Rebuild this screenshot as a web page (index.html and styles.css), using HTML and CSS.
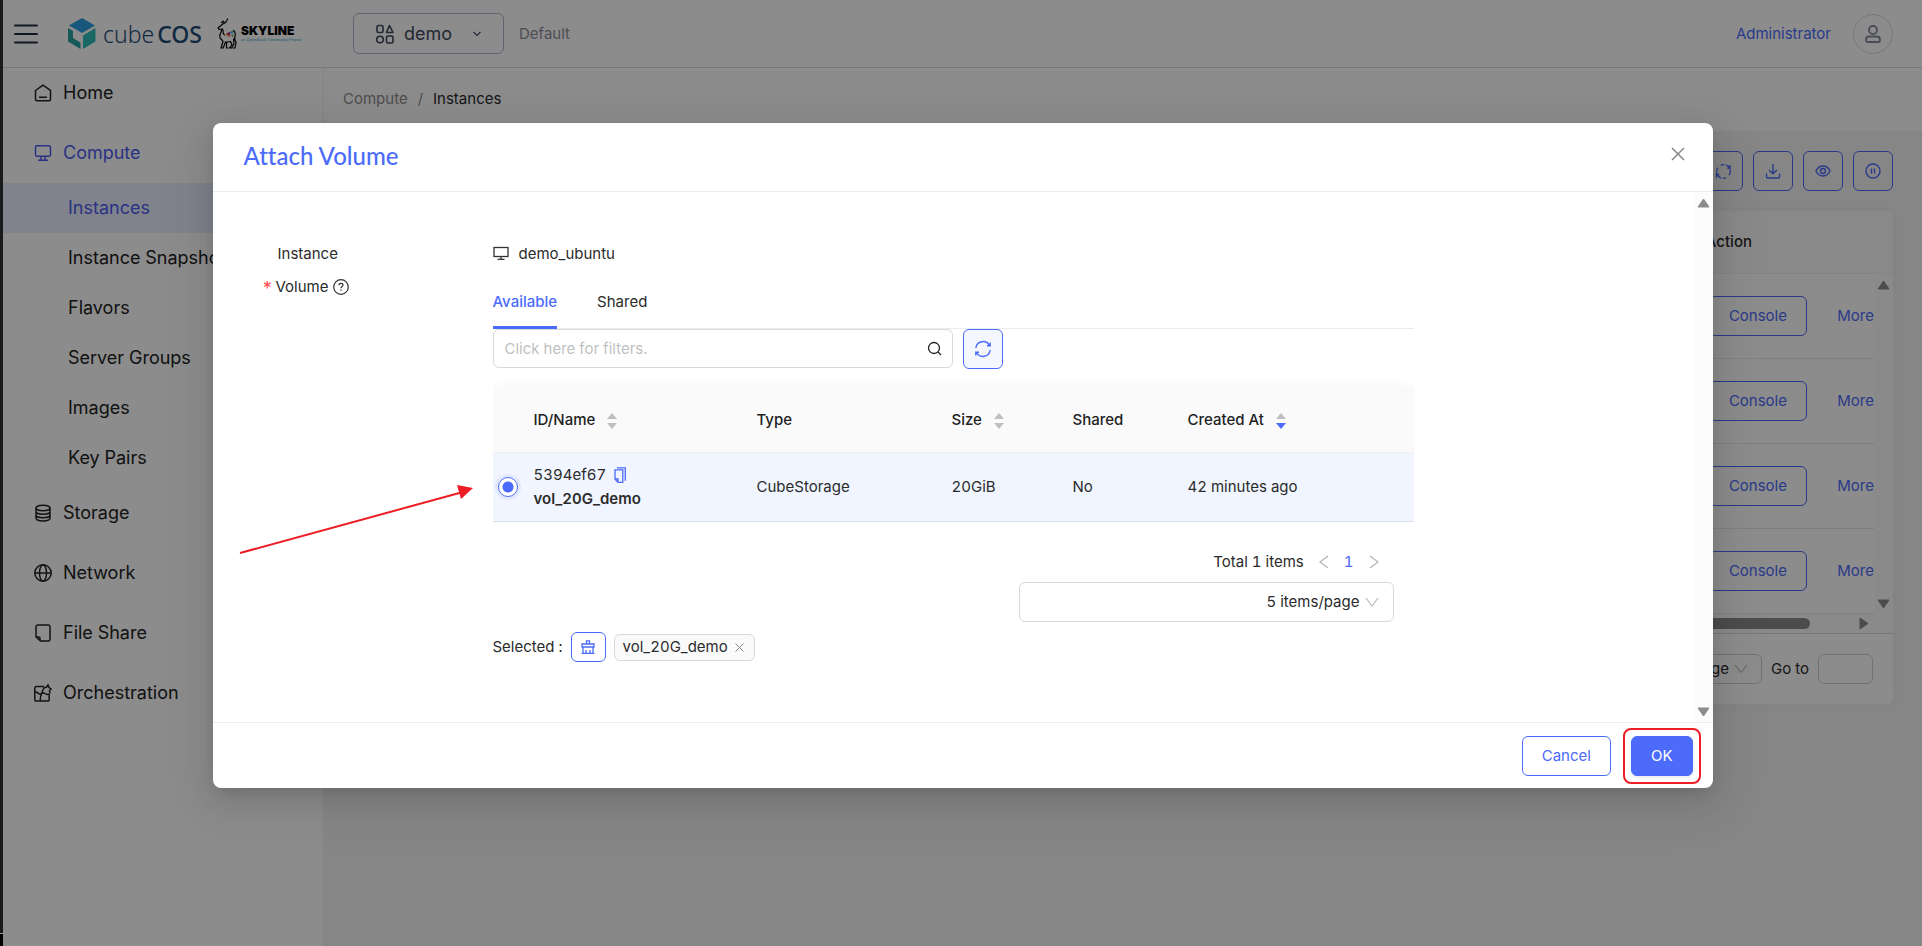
FILE: index.html
```html
<!DOCTYPE html>
<html lang="en">
<head>
  <meta charset="UTF-8">
  <meta name="viewport" content="width=device-width, initial-scale=1.0">
  <title>Instances - Attach Volume</title>
  <link rel="stylesheet" href="styles.css">
</head>
<body>
  <div class="edge"><span></span></div>

  <div class="app">
    <header class="header">
      <button class="menu-toggle" aria-label="Toggle menu">
        <svg width="24" height="20" viewBox="0 0 24 20"><path d="M1 1.500h22M1 10h22M1 18.500h22" stroke="#222c3c" stroke-width="2" stroke-linecap="round"/></svg>
      </button>
      <a class="logo" href="#">
        <svg width="28" height="31" viewBox="0 0 28 31">
          <path d="M14 0L27 7.500 14 15 1 7.500z" fill="#2b9fe0"/>
          <path d="M0 10l5 3v7l7.500 4.500V31L0 23.500z" fill="#2aa3a3"/>
          <path d="M27.500 10L15 17.500V31l12.500-7.500z" fill="#2fbdbb"/>
        </svg>
        <span class="logo-text">cube<b>COS</b></span>
        <svg class="goat" width="20" height="31" viewBox="0 0 20 31" fill="none" stroke="#000" stroke-width="1.200" stroke-linecap="round" stroke-linejoin="round">
          <path d="M10.500 1C9.500 2.500 10 4.500 6.500 5.500M7.500 5L6 3.200 4.500 4.500M6.500 5.500L4.500 7 1 10l1 1.500 3-.5M4.500 11.500c.5 2.500-2.500 4.500-1.500 8 .7 2 2.500 2.500 3 4L4 30h2.200L8.500 24M5.500 11c1.500 2-.5 5 2 6M8.500 24c2 .3 4-.5 5-.5l1.500 3-2.500 3.500h2l2.500-4-.5-5M17.500 20l1.500 5-1 5h-2M16.500 12.500c2 1.500 2 5 1 8M9.500 24.500V30h1.500"/>
          <path d="M7.500 17l2.500-2 1 2z" fill="#f5a623" stroke="none"/>
          <path d="M10 15l3-1 .5 3-2.500.500z" fill="#b0218a" stroke="none"/>
          <path d="M13 14l3-1.500-.5 4z" fill="#28a7e0" stroke="none"/>
          <path d="M9 18l3-1 2 2z" fill="#f36f21" stroke="none"/>
          <path d="M14 17l2.500-.5-.5 3z" fill="#5ab948" stroke="none"/>
        </svg>
        <span class="skyline"><strong>SKYLINE</strong><em>an OpenStack Community Project</em></span>
      </a>
      <button class="project-select">
        <svg width="18" height="20" viewBox="0 0 18 20" fill="none" stroke="#3f475a" stroke-width="1.600" stroke-linejoin="round"><rect x="1" y="1.500" width="6" height="7" rx="1.500"/><path d="M13.500 1.500L17 8.500h-6.500z"/><circle cx="4" cy="15.500" r="3.300"/><rect x="10.500" y="12" width="6.500" height="7" rx="1.500"/></svg>
        <span>demo</span>
        <svg width="8" height="6" viewBox="0 0 8 6"><path d="M.5 1L4 4.500 7.500 1" fill="none" stroke="#3f475a" stroke-width="1.100"/></svg>
      </button>
      <span class="domain">Default</span>
      <a class="user" href="#">Administrator</a>
      <button class="avatar" aria-label="Account">
        <svg width="16" height="18" viewBox="0 0 16 18" fill="none" stroke="#868b9a" stroke-width="1.800"><circle cx="8" cy="5" r="4"/><path d="M4 11.500h8c2 0 3 1.500 3 3.500 0 1.500-.5 2-1.500 2h-11C1.500 17 1 16.500 1 15c0-2 1-3.500 3-3.500z"/></svg>
      </button>
    </header>

    <div class="layout">
      <nav class="sidebar">
        <ul class="menu">
          <li><a class="menu-item" href="#"><svg width="18" height="18" viewBox="0 0 18 18"><path d="M1.500 6.500L9 1.200l7.500 5.300v8.500c0 1-.6 1.800-1.500 1.800H3c-.9 0-1.500-.8-1.500-1.800zM5 13.200h8"/></svg>Home</a></li>
          <li><a class="menu-item active" href="#"><svg width="18" height="18" viewBox="0 0 18 18"><rect x="1.500" y="1.800" width="15" height="10.500" rx="1.500"/><path d="M7 12.300V16M11 12.300V16M4 16.300h10"/></svg>Compute</a>
            <ul class="submenu">
              <li><a class="selected" href="#">Instances</a></li>
              <li><a href="#">Instance Snapshots</a></li>
              <li><a href="#">Flavors</a></li>
              <li><a href="#">Server Groups</a></li>
              <li><a href="#">Images</a></li>
              <li><a href="#">Key Pairs</a></li>
            </ul>
          </li>
          <li><a class="menu-item" href="#"><svg width="18" height="18" viewBox="0 0 18 18"><ellipse cx="9" cy="4" rx="7" ry="2.800"/><path d="M2 4v10c0 1.600 3 2.900 7 2.900s7-1.300 7-2.900V4M2 7.500c0 1.500 3 2.800 7 2.800s7-1.300 7-2.800M2 11c0 1.500 3 2.800 7 2.800s7-1.300 7-2.800"/></svg>Storage</a></li>
          <li><a class="menu-item" href="#"><svg width="18" height="18" viewBox="0 0 18 18"><circle cx="9" cy="9" r="8.200"/><ellipse cx="9" cy="9" rx="3.500" ry="8.200"/><path d="M1 9h16"/></svg>Network</a></li>
          <li><a class="menu-item" href="#"><svg width="18" height="18" viewBox="0 0 18 18"><path d="M4 1h10c1.300 0 2 .7 2 2v12c0 1.300-.7 2-2 2H6.500L2 13V3c0-1.300.7-2 2-2zM2 13h2.500c1 0 1.500.5 1.500 1.500V17"/></svg>File Share</a></li>
          <li><a class="menu-item" href="#"><svg width="18" height="18" viewBox="0 0 18 18"><path d="M10 2.500H2.500c-1 0-1.700.7-1.700 1.700v11c0 1 .7 1.800 1.700 1.800h11c1 0 1.700-.8 1.700-1.800V10M.8 8c2.500-1 3 2.500 5.500 2s3-2 4.700-.5 3 1 4.200.5M10.500 3.500C8 6 8.500 8 7.500 10S6 14 6.500 17M10.500 3.500l2-.3L14 .8l1 2.700 2.200 1.500-1.700 1.500.5 3"/></svg>Orchestration</a></li>
        </ul>
      </nav>

      <main class="content">
        <div class="breadcrumb"><a href="#">Compute</a><span>/</span><strong>Instances</strong></div>
        <div class="toolbar">
          <button class="icon-btn" aria-label="Refresh"><svg width="17" height="17" viewBox="0 0 18 18"><path d="M6.500 15.900A7.200 7.200 0 0 1 3 5M6 2.400A7.200 7.200 0 0 1 10 1.900M11.500 2.100A7.200 7.200 0 0 1 15 13M12 15.600A7.200 7.200 0 0 1 8 16.100M15.800 2v3.500h-3M1.500 15.500V12.200h3"/></svg></button>
          <button class="icon-btn" aria-label="Download"><svg width="16" height="16" viewBox="0 0 16 16"><path d="M8 1v9.500M4 7l4 3.800L12 7M1.500 10.500V14c0 .6.400 1 1 1h11c.6 0 1-.4 1-1v-3.500"/></svg></button>
          <button class="icon-btn" aria-label="Columns"><svg width="16" height="16" viewBox="0 0 16 16"><path d="M1 8c1.500-3.300 4-5 7-5s5.500 1.700 7 5c-1.500 3.300-4 5-7 5S2.500 11.300 1 8z"/><circle cx="8" cy="8" r="2.500"/></svg></button>
          <button class="icon-btn" aria-label="Pause"><svg width="16" height="16" viewBox="0 0 16 16"><circle cx="8" cy="8" r="7"/><path d="M6.500 5.500v5M9.500 5.500v5"/></svg></button>
        </div>

        <section class="card">
          <div class="card-scroll">
            <table class="list">
              <thead><tr><th colspan="2">Action</th></tr></thead>
              <tbody>
                <tr><td><button class="btn">Console</button></td><td><a href="#">More</a></td></tr>
                <tr><td><button class="btn">Console</button></td><td><a href="#">More</a></td></tr>
                <tr><td><button class="btn">Console</button></td><td><a href="#">More</a></td></tr>
                <tr><td><button class="btn">Console</button></td><td><a href="#">More</a></td></tr>
              </tbody>
            </table>
            <div class="track">
              <svg width="13" height="10" viewBox="0 0 13 10"><path d="M6.500 1L12 9H1z"/></svg>
              <svg width="13" height="10" viewBox="0 0 13 10"><path d="M6.500 9L1 1h11z"/></svg>
            </div>
          </div>
          <div class="track-h"><span class="thumb"></span><svg width="10" height="13" viewBox="0 0 10 13"><path d="M1 1l8 5.500L1 12z"/></svg></div>
          <div class="pager">
            <button class="page-size">10 items/page<svg width="14" height="10" viewBox="0 0 14 10"><path d="M1 1l6 7.500L13 1"/></svg></button>
            <label for="goto">Go to</label>
            <input type="text" id="goto">
          </div>
        </section>
      </main>
    </div>

    <div class="mask">
      <div class="modal" role="dialog" aria-labelledby="modalTitle">
        <div class="modal-header">
          <h2 id="modalTitle">Attach Volume</h2>
          <button class="close" aria-label="Close"><svg width="14" height="14" viewBox="0 0 14 14"><path d="M1 1l12 12M13 1L1 13" stroke="#888" stroke-width="1.500"/></svg></button>
        </div>

        <div class="modal-body">
          <div class="form">
            <div class="form-label">Instance</div>
            <div class="form-value">
              <svg width="16" height="16" viewBox="0 0 16 16" fill="none" stroke="#333" stroke-width="1.300"><rect x="1" y="1.500" width="14" height="9"/><path d="M8 10.500V13.300M4.500 13.300h7"/></svg>
              demo_ubuntu
            </div>

            <div class="form-label required"><i>*</i>Volume
              <svg width="16" height="16" viewBox="0 0 16 16" fill="none" stroke="#333" stroke-width="1.200"><circle cx="8" cy="8" r="7.300"/><path d="M6 6.200C6 5 6.800 4.300 8 4.300s2 .7 2 1.700c0 1.500-2 1.500-2 3.200M8 10.500v1.300"/></svg>
            </div>
            <div class="form-control">
              <div class="tabs">
                <button class="tab current">Available</button>
                <button class="tab">Shared</button>
              </div>
              <div class="filter">
                <div class="search">
                  <input type="text" aria-label="Filters" placeholder="Click here for filters.">
                  <svg width="15" height="15" viewBox="0 0 15 15" fill="none" stroke="#222" stroke-width="1.300"><circle cx="7" cy="7" r="5.500"/><path d="M11 11l3 3"/></svg>
                </div>
                <button class="icon-btn tint" aria-label="Refresh list"><svg width="18" height="18" viewBox="0 0 18 18"><path d="M1.800 8A7.300 7.300 0 0 1 15.500 5.500M16.200 10A7.300 7.300 0 0 1 2.500 12.500M16.200 2.500v3.200H13M1.800 15.500v-3.200H5"/></svg></button>
              </div>

              <div class="table-wrap">
                <table class="volumes">
                  <colgroup><col class="c-radio"><col class="c-name"><col class="c-type"><col class="c-size"><col class="c-shared"><col></colgroup>
                  <thead>
                    <tr>
                      <th></th>
                      <th>ID/Name<svg class="sorter" width="10" height="16" viewBox="0 0 10 16"><path d="M5 0l5 6H0z"/><path d="M5 16l5-6H0z"/></svg></th>
                      <th>Type</th>
                      <th>Size<svg class="sorter" width="10" height="16" viewBox="0 0 10 16"><path d="M5 0l5 6H0z"/><path d="M5 16l5-6H0z"/></svg></th>
                      <th>Shared</th>
                      <th>Created At<svg class="sorter desc" width="10" height="16" viewBox="0 0 10 16"><path d="M5 0l5 6H0z"/><path d="M5 16l5-6H0z"/></svg></th>
                    </tr>
                  </thead>
                  <tbody>
                    <tr>
                      <td><input type="radio" name="volume" aria-label="vol_20G_demo" checked></td>
                      <td>
                        <div class="vol-id">5394ef67<svg width="12" height="16" viewBox="0 0 12 16" fill="none" stroke="#4c6bfa" stroke-width="1.300"><path d="M1 2.800h7.800V15.300H4L1 12.300zM1 12h3v3.300M3 .8h8.300v13"/></svg></div>
                        <strong>vol_20G_demo</strong>
                      </td>
                      <td>CubeStorage</td>
                      <td>20GiB</td>
                      <td>No</td>
                      <td>42 minutes ago</td>
                    </tr>
                  </tbody>
                </table>
              </div>

              <div class="pagination">
                <div class="pages">
                  <span>Total 1 items</span>
                  <button aria-label="Previous"><svg width="10" height="14" viewBox="0 0 10 14"><path d="M9 1L1 7l8 6"/></svg></button>
                  <button class="on">1</button>
                  <button aria-label="Next"><svg width="10" height="14" viewBox="0 0 10 14"><path d="M1 1l8 6-8 6"/></svg></button>
                </div>
                <select aria-label="Page size"><option>5 items/page</option></select>
              </div>

              <div class="picked">
                <span>Selected :</span>
                <button class="clear" aria-label="Clear selection"><svg width="14" height="14" viewBox="0 0 14 14"><path d="M5.500 4V.8h3V4M1 4h12v3H1zM2 7v6.300h10V7M5 10v3.300M9 10v3.300M.5 13.300h13"/></svg></button>
                <span class="tag">vol_20G_demo<button aria-label="Remove"><svg width="9" height="9" viewBox="0 0 9 9"><path d="M.5.5l8 8M8.500.5l-8 8" stroke="#888"/></svg></button></span>
              </div>
            </div>
          </div>

          <div class="track">
            <svg width="13" height="10" viewBox="0 0 13 10"><path d="M6.500 1L12 9H1z"/></svg>
            <svg width="13" height="10" viewBox="0 0 13 10"><path d="M6.500 9L1 1h11z"/></svg>
          </div>

          <svg class="arrow" width="236" height="70" viewBox="0 0 236 70"><path d="M1 68L224 7" stroke="#ee1c24" stroke-width="2"/><path d="M218 0l16 3-12 11z" fill="#ee1c24"/></svg>
        </div>

        <div class="modal-footer">
          <button class="btn">Cancel</button>
          <span class="mark"><button class="btn primary">OK</button></span>
        </div>
      </div>
    </div>
  </div>
</body>
</html>
```
FILE: styles.css
```css
* {
  box-sizing: border-box;
}
body {
  margin: 0;
  min-height: 100vh;
  display: flex;
  font-family: Inter, "Liberation Sans", sans-serif;
  font-size: 15px;
  font-variant-numeric: tabular-nums;
  line-height: 24px;
  color: #2b2b2b;
}
a {
  text-decoration: none;
  color: #4c6bfa;
}
button, input, select {
  font: inherit;
  color: inherit;
  margin: 0;
  padding: 0;
  background: none;
  border: none;
}
ul {
  list-style: none;
  margin: 0;
  padding: 0;
}
svg {
  flex: none;
}

/* window edge */
.edge {
  width: 3px;
  background: #1a1a1a;
  display: flex;
  align-items: flex-end;
}
.edge span {
  width: 3px;
  height: 13px;
  background: #000;
  border-top: 1px solid #999;
}
.app {
  flex: 1;
  min-width: 0;
  position: relative;
  display: flex;
  flex-direction: column;
  background: #fff;
}

/* header */
.header {
  height: 68px;
  display: flex;
  align-items: center;
  border-bottom: 1px solid #d9d9e0;
  padding: 0 29px 0 11px;
}
.menu-toggle {
  display: flex;
  margin-right: 30px;
}
.logo {
  display: flex;
  align-items: center;
  width: 285px;
}
.logo-text {
  margin-left: 7px;
  font: 300 23px/30px "Noto Sans", sans-serif;
  color: #1f4a78;
}
.logo-text b {
  font-weight: 500;
  margin-left: 3px;
}
.goat {
  margin-left: 15px;
}
.skyline {
  display: flex;
  flex-direction: column;
  margin-left: 4px;
  color: #000;
}
.skyline strong {
  font-size: 12px;
  font-weight: 900;
  line-height: 12px;
}
.skyline em {
  font: italic 4px/6px "Liberation Sans", sans-serif;
  color: #2aa3c9;
}
.project-select {
  width: 151px;
  height: 41px;
  border: 1px solid #b0b4cc;
  border-radius: 6px;
  display: flex;
  align-items: center;
  padding: 0 22px;
  font-size: 18px;
  color: #3f475a;
}
.project-select span {
  flex: 1;
  text-align: left;
  padding-left: 10px;
}
.domain {
  flex: 1;
  margin-left: 15px;
  color: #8a8e99;
}
.avatar {
  width: 40px;
  height: 40px;
  margin-left: 22px;
  border: 1px solid #d9d9e8;
  border-radius: 50%;
  display: flex;
  align-items: center;
  justify-content: center;
}

/* sidebar */
.layout {
  flex: 1;
  display: flex;
}
.sidebar {
  width: 321px;
  padding-top: 5px;
  border-right: 1px solid #eee;
}
.menu-item {
  height: 40px;
  margin-bottom: 20px;
  padding-left: 31px;
  display: flex;
  align-items: center;
  font-size: 18px;
  color: #222;
}
.menu-item svg {
  margin-right: 11px;
  fill: none;
  stroke: currentColor;
  stroke-width: 1.5;
}
.menu-item.active, .submenu .selected {
  color: #4c5cf0;
}
.submenu {
  margin: -10px 0 10px;
}
.submenu a {
  display: block;
  padding-left: 65px;
  font-size: 18px;
  line-height: 50px;
  color: #222;
}
.submenu .selected {
  background: #e9eeff;
}

/* page behind the dialog */
.content {
  flex: 1;
  min-width: 0;
  background: #f5f5f5;
}
.breadcrumb {
  height: 63px;
  padding: 19px;
  background: #fff;
}
.breadcrumb a {
  color: #8c8c8c;
}
.breadcrumb span {
  margin: 0 10px;
  color: #8c8c8c;
}
.breadcrumb strong {
  font-weight: 400;
}
.toolbar {
  display: flex;
  justify-content: flex-end;
  gap: 10px;
  padding: 20px 29px;
}
.icon-btn {
  width: 40px;
  height: 40px;
  border: 1px solid #4c6bfa;
  border-radius: 6px;
  display: flex;
  align-items: center;
  justify-content: center;
}
.icon-btn svg {
  fill: none;
  stroke: #4c6bfa;
  stroke-width: 1.4;
}
.icon-btn.tint {
  background: #f5f7ff;
}
.card {
  margin: 0 29px 0 16px;
  background: #fff;
  border-radius: 6px;
  box-shadow: 0 0 16px rgba(60, 60, 120, 0.06);
}
.card-scroll {
  position: relative;
}
.list {
  width: 100%;
  border-collapse: collapse;
}
.list th {
  height: 62px;
  padding: 0 141px 0 0;
  text-align: right;
  font-weight: 500;
  background: #fafafa;
  border-bottom: 1px solid #eee;
}
.list td {
  height: 85px;
  padding: 0;
  text-align: right;
  border-bottom: 1px solid #e8e8e8;
}
.list td:last-child {
  width: 86px;
  padding-right: 19px;
}
.btn {
  height: 40px;
  padding: 0 19px;
  border: 1px solid #4c6bfa;
  border-radius: 6px;
  color: #4c6bfa;
}
.btn.primary {
  background: #4c6bfa;
  color: #fff;
  box-shadow: 0 2px 3px rgba(0, 0, 0, 0.08);
}
.track {
  width: 19px;
  background: #fcfcfc;
  display: flex;
  flex-direction: column;
  align-items: center;
  justify-content: space-between;
  padding: 6px 0 5px;
}
.track svg, .track-h svg {
  fill: #8b8b8b;
  stroke: #8b8b8b;
  stroke-linejoin: round;
}
.card-scroll .track {
  position: absolute;
  top: 63px;
  right: 0;
  bottom: 0;
}
.track-h {
  height: 20px;
  padding: 0 24px 0 0;
  background: #fcfcfc;
  border-bottom: 1px solid #d5d5e0;
  display: flex;
  align-items: center;
}
.thumb {
  flex: 1;
  height: 11px;
  margin-right: 49px;
  border-radius: 6px;
  background: #8b8b8b;
}
.pager {
  display: flex;
  align-items: center;
  justify-content: flex-end;
  gap: 9px;
  padding: 20px;
}
.page-size, .pager input {
  height: 30px;
  border: 1px solid #d0d0d0;
  border-radius: 6px;
}
.page-size {
  padding: 0 13px;
  display: flex;
  align-items: center;
  gap: 5px;
}
.page-size svg {
  fill: none;
  stroke: #aaa;
}
.pager input {
  width: 55px;
}

/* dialog */
.mask {
  position: absolute;
  inset: 0;
  background: rgba(0, 0, 0, 0.45);
  display: flex;
  align-items: flex-start;
  justify-content: center;
  padding-top: 123px;
}
.modal {
  width: 90%;
  max-width: 1500px;
  background: #fff;
  border-radius: 8px;
  box-shadow: 0 6px 16px -8px rgba(0, 0, 0, 0.16), 0 9px 28px 0 rgba(0, 0, 0, 0.1), 0 12px 48px 16px rgba(0, 0, 0, 0.06);
}
.modal-header {
  height: 69px;
  padding: 0 28px 0 31px;
  display: flex;
  align-items: center;
  justify-content: space-between;
  border-bottom: 1px solid #ececec;
}
.modal-header h2 {
  margin: 0;
  padding-bottom: 2px;
  font: 500 24px/30px Lato, sans-serif;
  font-variant-ligatures: none;
  color: #4c6bfa;
}
.close {
  display: flex;
  padding-bottom: 6px;
}
.modal-body {
  position: relative;
  display: flex;
}
.form {
  flex: 1;
  min-width: 0;
  display: grid;
  grid-template-columns: 280px minmax(0, 1fr) 280px;
  grid-template-rows: 33px auto;
  padding: 50px 0 60px;
}
.form-label {
  grid-column: 1;
  padding-left: 65px;
}
.form-value {
  display: flex;
  align-items: center;
  gap: 10px;
  height: 24px;
}
.form-label.required {
  padding-left: 49px;
  display: flex;
  align-items: center;
  height: 24px;
}
.required i {
  width: 14px;
  padding-top: 4px;
  font-size: 18px;
  font-style: normal;
  color: #ff4d4f;
}
.required svg {
  margin-left: 5px;
}
.tabs {
  display: flex;
  gap: 40px;
  border-bottom: 1px solid #ececec;
}
.tab {
  height: 54px;
  margin-bottom: -1px;
  padding-top: 2px;
  border-bottom: 3px solid transparent;
}
.tab.current {
  color: #4c6bfa;
  font-weight: 500;
  border-color: #4c6bfa;
}
.filter {
  display: flex;
  gap: 10px;
}
.search {
  position: relative;
  width: 50%;
}
.search input {
  width: 100%;
  height: 39px;
  padding: 0 40px 0 11px;
  border: 1px solid #d9d9d9;
  border-radius: 6px;
}
.search input::placeholder {
  color: #bfbfbf;
}
.search svg {
  position: absolute;
  right: 11px;
  top: 12px;
}
.table-wrap {
  margin-top: 3px;
  padding-top: 16px;
  overflow: hidden;
}
.volumes {
  width: 100%;
  table-layout: fixed;
  border-collapse: separate;
  border-spacing: 0;
  border-radius: 8px 8px 0 0;
  box-shadow: 0 0 14px rgba(0, 0, 0, 0.05);
}
.c-radio { width: 41px; }
.c-name { width: 223px; }
.c-type { width: 195px; }
.c-size { width: 121px; }
.c-shared { width: 115px; }
.volumes th {
  height: 65px;
  padding: 0;
  text-align: left;
  font-weight: 500;
  color: #222;
  background: #fafafa;
  border-bottom: 1px solid #f0f0f0;
}
.volumes td {
  height: 69px;
  padding: 0;
  background: #f0f5ff;
  border-bottom: 1px solid #d9dfec;
}
.sorter {
  margin-left: 12px;
  vertical-align: middle;
  fill: #bfbfbf;
}
.sorter.desc path:last-child {
  fill: #4c6bfa;
}
.volumes input {
  appearance: none;
  display: block;
  width: 20px;
  height: 20px;
  margin-left: 5px;
  border: 1px solid #4c6bfa;
  border-radius: 50%;
  background: radial-gradient(circle, #4c6bfa 5px, #fff 6px);
  box-shadow: 0 0 0 3px #e3e8ff;
}
.vol-id {
  display: flex;
  align-items: center;
  gap: 8px;
}
.volumes strong {
  font-weight: 600;
}
.pagination {
  display: flex;
  flex-direction: column;
  align-items: flex-end;
  padding: 28px 20px 0 0;
}
.pages {
  display: flex;
  align-items: center;
  gap: 15px;
  height: 24px;
  margin: 0 15px 8px 0;
}
.pages svg {
  display: block;
  fill: none;
  stroke: #b5b5b5;
  stroke-width: 1.3;
}
.pages .on {
  color: #4c6bfa;
}
.pagination select {
  appearance: none;
  width: 375px;
  height: 40px;
  padding-right: 33px;
  text-align: right;
  text-align-last: right;
  border: 1px solid #d9d9d9;
  border-radius: 6px;
  background: url("data:image/svg+xml,%3Csvg xmlns='http://www.w3.org/2000/svg' width='14' height='10'%3E%3Cpath d='M1 1l6 8 6-8' fill='none' stroke='%23bbb' stroke-width='1.200'/%3E%3C/svg%3E") no-repeat right 14px center;
}
.picked {
  display: flex;
  align-items: center;
  gap: 8px;
  margin-top: 10px;
}
.clear {
  width: 35px;
  height: 30px;
  display: flex;
  align-items: center;
  justify-content: center;
  border: 1px solid #4c6bfa;
  border-radius: 6px;
}
.clear svg {
  fill: none;
  stroke: #4c6bfa;
  stroke-width: 1.3;
}
.tag {
  height: 27px;
  padding: 0 10px 0 8px;
  display: flex;
  align-items: center;
  gap: 7px;
  background: #fafafa;
  border: 1px solid #d9d9d9;
  border-radius: 6px;
}
.tag button, .tag svg {
  display: block;
}
.arrow {
  position: absolute;
  left: 26px;
  top: 293px;
}
.modal-footer {
  height: 66px;
  padding: 0 12px;
  display: flex;
  align-items: center;
  justify-content: flex-end;
  gap: 12px;
  border-top: 1px solid #ececec;
}
.mark {
  padding: 6px;
  border: 2px solid #ee1c24;
  border-radius: 8px;
}
.mark .btn {
  display: block;
}
```
